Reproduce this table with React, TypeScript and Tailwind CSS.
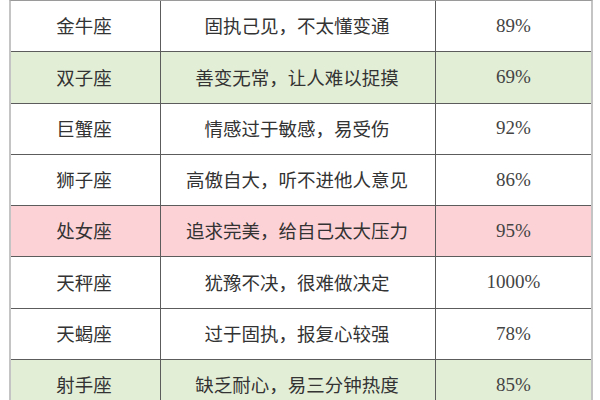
import React from "react";

type Row = { sign: string; desc: string; pct: string; bg: string };

const rows: Row[] = [
  { sign: "金牛座", desc: "固执己见，不太懂变通", pct: "89%", bg: "bg-white" },
  { sign: "双子座", desc: "善变无常，让人难以捉摸", pct: "69%", bg: "bg-[#e3eed7]" },
  { sign: "巨蟹座", desc: "情感过于敏感，易受伤", pct: "92%", bg: "bg-white" },
  { sign: "狮子座", desc: "高傲自大，听不进他人意见", pct: "86%", bg: "bg-white" },
  { sign: "处女座", desc: "追求完美，给自己太大压力", pct: "95%", bg: "bg-[#fdd2d7]" },
  { sign: "天秤座", desc: "犹豫不决，很难做决定", pct: "1000%", bg: "bg-white" },
  { sign: "天蝎座", desc: "过于固执，报复心较强", pct: "78%", bg: "bg-white" },
  { sign: "射手座", desc: "缺乏耐心，易三分钟热度", pct: "85%", bg: "bg-[#e3eed7]" },
];

export default function App() {
  return (
    <div className="w-[600px] h-[400px] overflow-hidden bg-white">
      <div className="ml-[9px] w-[584px] border-x-2 border-t border-x-[#c4c4c4] border-t-[#9a9a9a]">
        {rows.map((r) => (
          <div
            key={r.sign}
            className={`flex h-[51.3px] border-b border-[#5c5c5c] ${r.bg}`}
          >
            <div className="w-[150px] border-r border-[#5c5c5c] flex items-center justify-center text-[18.5px] text-[#333] pr-[3px] [font-family:'Noto_Sans_CJK_SC',sans-serif]">
              {r.sign}
            </div>
            <div className="w-[275px] border-r border-[#5c5c5c] flex items-center justify-center text-[18.5px] text-[#333] pr-[2px] [font-family:'Noto_Sans_CJK_SC',sans-serif]">
              {r.desc}
            </div>
            <div className="flex-1 flex items-center justify-center text-[19px] text-[#444] [font-family:'Liberation_Serif',serif]">
              {r.pct}
            </div>
          </div>
        ))}
      </div>
    </div>
  );
}
